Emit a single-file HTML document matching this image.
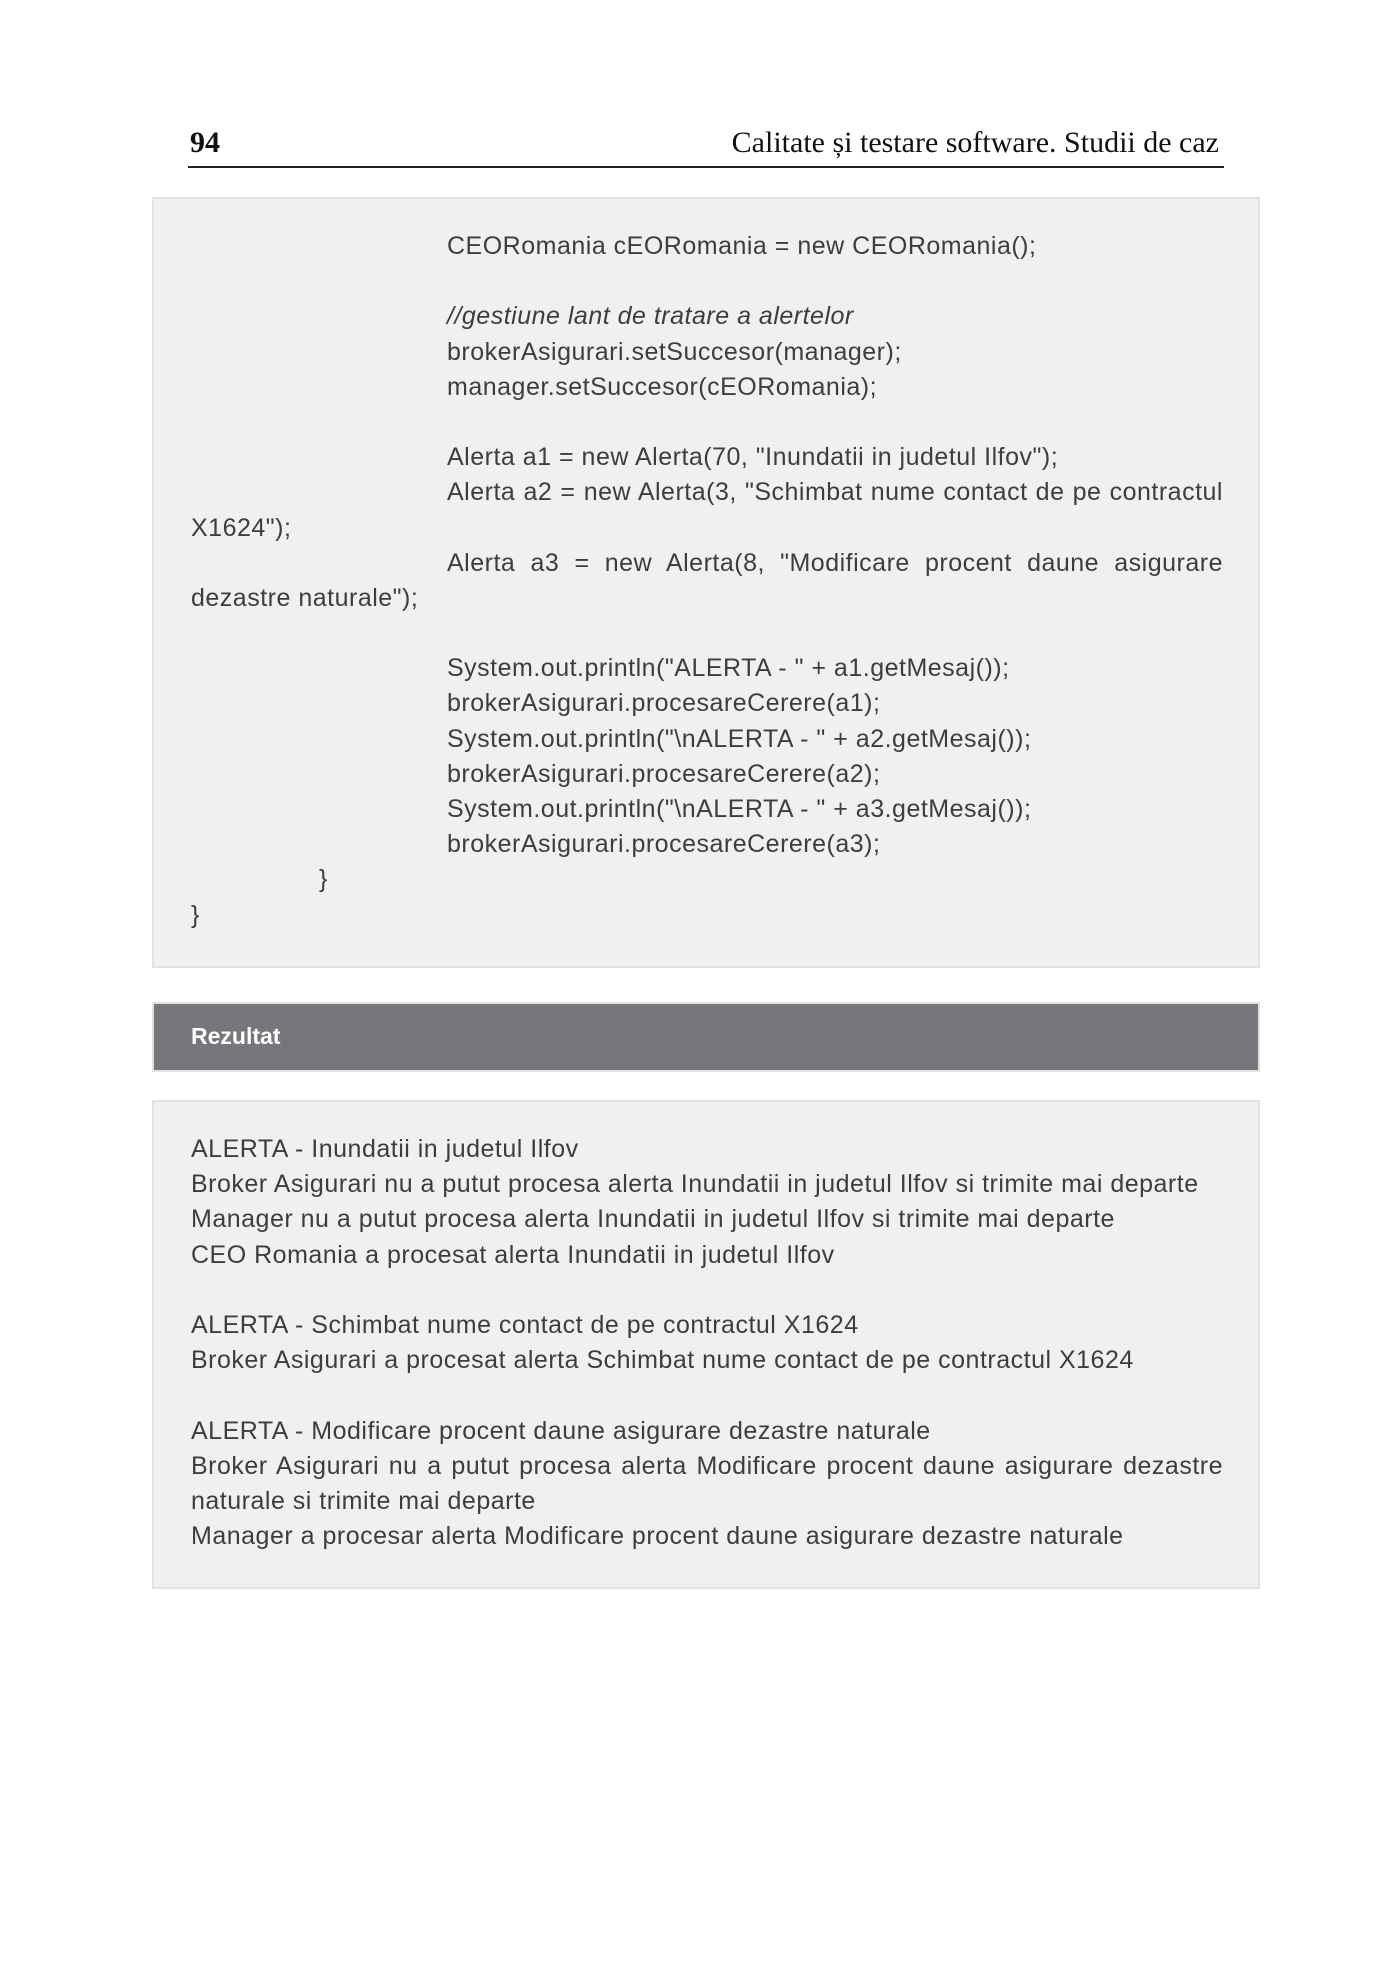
<!DOCTYPE html>
<html><head><meta charset="utf-8"><style>
html,body{margin:0;padding:0;background:#fff;}
body{width:1386px;height:1969px;position:relative;overflow:hidden;font-family:"Liberation Sans",sans-serif;color:#3d3d3d;}
.hdr{position:absolute;top:126px;font-family:"Liberation Serif",serif;font-size:30px;color:#111;}
.rule{position:absolute;left:188px;width:1036px;top:166px;height:2px;background:#222;}
.box{position:absolute;left:152px;width:1104px;background:#f0f0f0;border:2px solid #e2e2e2;}
.lines{position:absolute;left:191px;width:1032px;font-size:25px;letter-spacing:0.5px;line-height:35.2px;}
.lines div{height:35.2px;white-space:nowrap;}
.ind{padding-left:256px;}
.j{text-align:justify;text-align-last:justify;white-space:normal!important;}
.bar{position:absolute;left:152px;width:1104px;top:1002px;height:66px;background:#76777b;border:2px solid #e2e2e2;box-sizing:content-box;}
.bar span{position:absolute;left:37px;top:19px;color:#fff;font-weight:bold;font-size:23px;}
</style></head><body>
<div class="hdr" style="left:190px;font-weight:bold;">94</div>
<div class="hdr" style="right:167px;">Calitate și testare software. Studii de caz</div>
<div class="rule"></div>

<div class="box" style="top:197px;height:767px;"></div>
<div class="lines" style="top:229px;">
<div class="ind">CEORomania cEORomania = new CEORomania();</div>
<div></div>
<div class="ind"><i>//gestiune lant de tratare a alertelor</i></div>
<div class="ind">brokerAsigurari.setSuccesor(manager);</div>
<div class="ind">manager.setSuccesor(cEORomania);</div>
<div></div>
<div class="ind">Alerta a1 = new Alerta(70, "Inundatii in judetul Ilfov");</div>
<div class="ind j">Alerta a2 = new Alerta(3, "Schimbat nume contact de pe contractul</div>
<div>X1624");</div>
<div class="ind j">Alerta a3 = new Alerta(8, "Modificare procent daune asigurare</div>
<div>dezastre naturale");</div>
<div></div>
<div class="ind">System.out.println("ALERTA - " + a1.getMesaj());</div>
<div class="ind">brokerAsigurari.procesareCerere(a1);</div>
<div class="ind">System.out.println("\nALERTA - " + a2.getMesaj());</div>
<div class="ind">brokerAsigurari.procesareCerere(a2);</div>
<div class="ind">System.out.println("\nALERTA - " + a3.getMesaj());</div>
<div class="ind">brokerAsigurari.procesareCerere(a3);</div>
<div style="padding-left:128px;">}</div>
<div>}</div>
</div>

<div class="bar"><span>Rezultat</span></div>

<div class="box" style="top:1100px;height:485px;"></div>
<div class="lines" style="top:1132px;">
<div>ALERTA - Inundatii in judetul Ilfov</div>
<div>Broker Asigurari nu a putut procesa alerta Inundatii in judetul Ilfov si trimite mai departe</div>
<div>Manager nu a putut procesa alerta Inundatii in judetul Ilfov si trimite mai departe</div>
<div>CEO Romania a procesat alerta Inundatii in judetul Ilfov</div>
<div></div>
<div>ALERTA - Schimbat nume contact de pe contractul X1624</div>
<div>Broker Asigurari a procesat alerta Schimbat nume contact de pe contractul X1624</div>
<div></div>
<div>ALERTA - Modificare procent daune asigurare dezastre naturale</div>
<div class="j">Broker Asigurari nu a putut procesa alerta Modificare procent daune asigurare dezastre</div>
<div>naturale si trimite mai departe</div>
<div>Manager a procesar alerta Modificare procent daune asigurare dezastre naturale</div>
</div>
</body></html>
